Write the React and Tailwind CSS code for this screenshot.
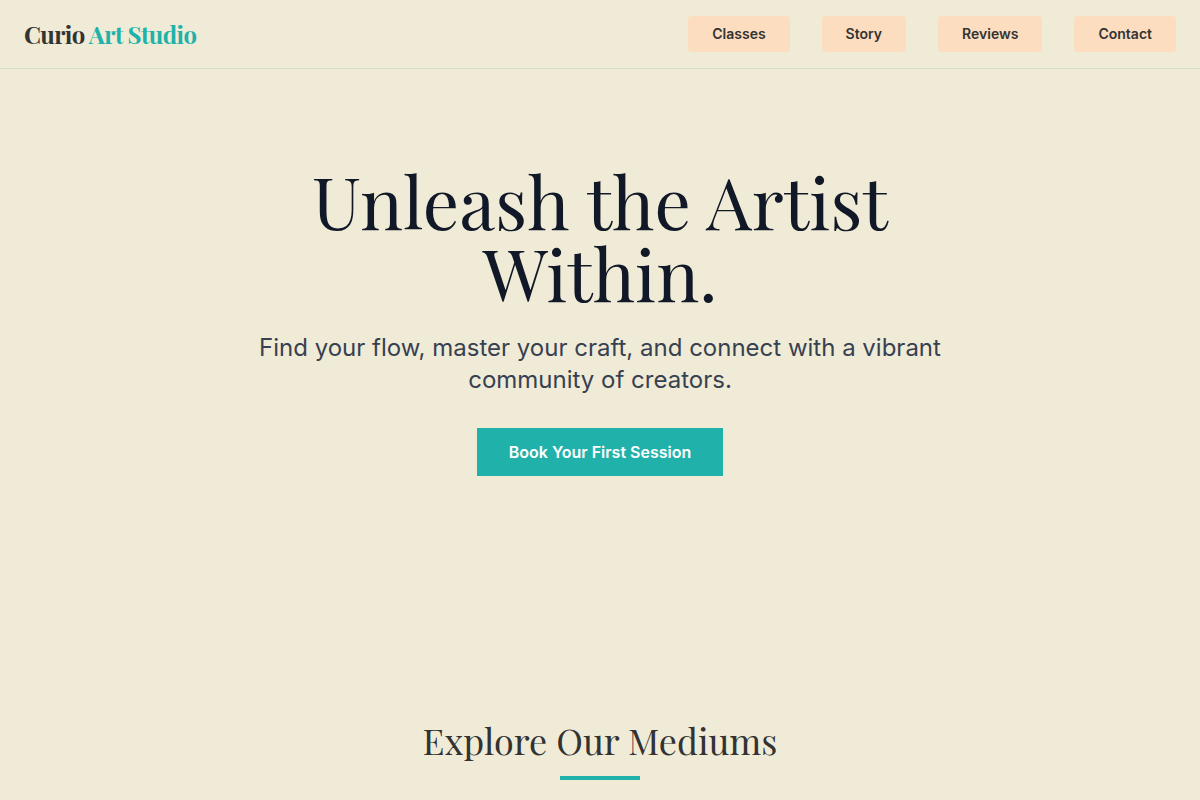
export default function App() {
  const links = ["Classes", "Story", "Reviews", "Contact"];
  const serif = "font-['Playfair_Display','Liberation_Serif',serif]";
  return (
    <div className="min-h-screen bg-[#f0ebd6] font-['Inter',sans-serif] text-[#333333]">
      <header className="flex h-[69px] items-center justify-between border-b border-[#d2dec8] px-6">
        <div className={`${serif} text-2xl font-bold tracking-tight`}>
          Curio <span className="text-[#20b2aa]">Art Studio</span>
        </div>
        <nav className="flex gap-8">
          {links.map((l) => (
            <a key={l} className="rounded bg-[#ffdab9]/80 px-6 py-2 text-sm font-semibold">{l}</a>
          ))}
        </nav>
      </header>
      <main className="flex flex-col items-center pt-[95px] text-center">
        <h1 className={`${serif} max-w-[800px] text-7xl text-[#111827]`}>Unleash the Artist Within.</h1>
        <p className="mt-6 max-w-[720px] text-2xl leading-8 text-[#374151]">
          Find your flow, master your craft, and connect with a vibrant community of creators.
        </p>
        <a className="mt-8 bg-[#20b2aa] px-8 py-3 font-semibold text-white">Book Your First Session</a>
        <h2 className={`${serif} mt-[244px] text-4xl`}>Explore Our Mediums</h2>
        <div className="mt-4 h-1 w-20 bg-[#20b2aa]"></div>
      </main>
    </div>
  );
}
